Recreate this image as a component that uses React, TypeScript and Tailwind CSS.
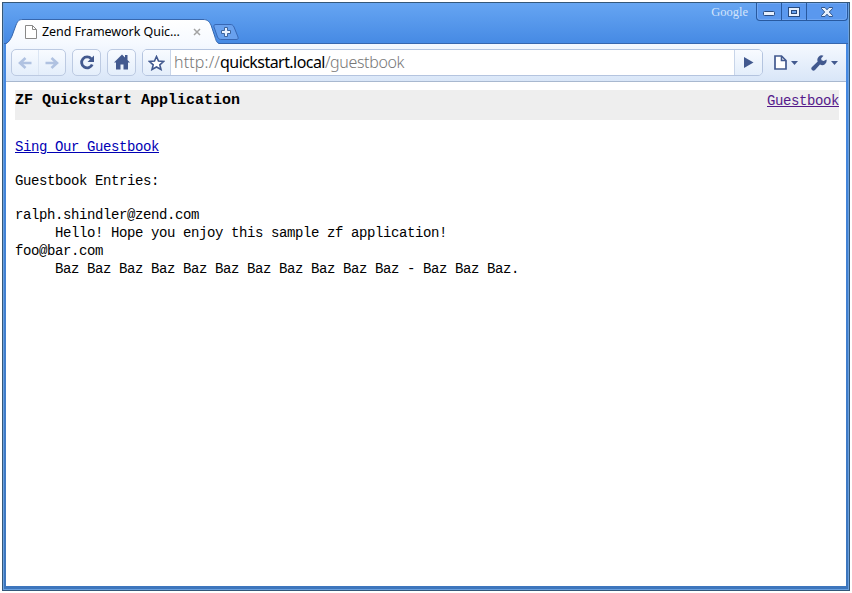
import React from "react";

const icon = "#42598f";

function TabStrip() {
  return (
    <div className="flex items-start pt-[16px]">
      <div className="relative h-[25px] w-[213px]">
        <svg className="absolute left-0 top-0" width="216" height="25" viewBox="0 0 216 25">
          <defs>
            <linearGradient id="tab" x1="0" y1="0" x2="0" y2="1">
              <stop offset="0" stopColor="#ffffff" />
              <stop offset="1" stopColor="#f5f9ff" />
            </linearGradient>
          </defs>
          <path
            d="M2 25 C5 23 6 21 8 17 L12 6 C14 1.5 15 0.5 19 0.5 H199 C203 0.5 205 2 207 6 L211 18 C212.500 22.500 213 24.500 216 25 Z"
            fill="url(#tab)"
          />
          <path
            d="M2 24.500 C5 23 6 21 8 17 L12 6 C14 1.5 15 0.5 19 0.5 H199 C203 0.5 205 2 207 6 L211 18 C212 22 213 24.500 216 24.500"
            fill="none"
            stroke="#3767ae"
          />
        </svg>
        <div className="relative flex h-[25px] items-center pl-[21px]">
          <svg width="12" height="14" viewBox="0 0 12 14">
            <path d="M.5 .5 H7.5 L11.5 4.5 V13.5 H.5 Z" fill="#fff" stroke="#888" />
            <path d="M7.5 .5 V4.5 H11.5" fill="none" stroke="#888" />
          </svg>
          <span className="ml-[5px] w-[146px] whitespace-nowrap font-['Noto_Sans',sans-serif] text-[12.5px] leading-[16px] tracking-[-0.05px] text-black">
            Zend Framework Quic...
          </span>
          <svg width="8" height="8" viewBox="0 0 8 8" className="ml-[5px]">
            <path d="M1 1 L7 7 M7 1 L1 7" stroke="#a3a3a3" strokeWidth="1.5" />
          </svg>
        </div>
      </div>
      <svg width="27" height="17" viewBox="0 0 27 17" className="-ml-[5px] mt-[5px]">
        <path
          d="M4 .5 H18 C20 .5 21 1 22 3 L26 13 C26.5 15 26 15.5 24 15.5 H10 C7.500 15.500 6.500 15 5.500 13 L2 3 C1.500 1.500 2 .5 4 .5 Z"
          fill="#69a1ee"
          stroke="#3868b4"
        />
        <path d="M12.500 3.500 H15.500 V6.500 H18.500 V9.500 H15.500 V12.500 H12.500 V9.500 H9.500 V6.500 H12.500 Z" fill="#e9f2ff" stroke="#3c659f" />
      </svg>
    </div>
  );
}

function WindowButtons() {
  return (
    <div className="flex items-start">
      <span className="mr-[8px] pt-[2px] font-['Liberation_Serif',serif] text-[12.5px] leading-[15px] text-[#d3e4fb]">Google</span>
      <div className="flex h-[18px] w-[92px] rounded-b-[4px] border border-t-0 border-[#28599f] bg-[#5a98ee] shadow-[inset_0_0_0_1px_#70a7f3]">
        <div className="flex w-[25px] items-center justify-center border-r border-[#28599f]">
          <svg width="12" height="6" viewBox="0 0 12 6" className="mt-[5px]">
            <rect x=".5" y=".5" width="11" height="4" rx="1" fill="#e6f0fd" stroke="#284b80" />
          </svg>
        </div>
        <div className="flex w-[25px] items-center justify-center border-r border-[#28599f]">
          <svg width="12" height="10" viewBox="0 0 12 10">
            <rect x=".5" y=".5" width="11" height="9" fill="#e6f0fd" stroke="#284b80" />
            <rect x="3.500" y="3.500" width="5" height="3" fill="#69a3ef" stroke="#284b80" />
          </svg>
        </div>
        <div className="flex flex-1 items-center justify-center">
          <svg width="12" height="10" viewBox="0 0 12 10">
            <path d="M.5 .5 H4 L6 2.800 L8 .5 H11.500 V1.500 L8.300 5 L11.500 8.500 V9.500 H8 L6 7.200 L4 9.500 H.5 V8.500 L3.700 5 L.5 1.500 Z" fill="#e6f0fd" stroke="#284b80" strokeWidth=".9" />
          </svg>
        </div>
      </div>
    </div>
  );
}

const button = "flex h-[27px] items-center justify-center rounded-[5px] border border-[#bccae2] bg-gradient-to-b from-[#f8fbff] to-[#e4eefb]";

function Toolbar() {
  return (
    <div className="flex h-[38px] items-start border-b border-[#a8b8cf] bg-gradient-to-b from-[#f5f9ff] to-[#d9e6f8] pl-[5px] pt-[5px]">
      <div className={button + " w-[55px]"}>
        <div className="flex h-full flex-1 items-center justify-center border-r border-[#dbe5f3]">
          <svg width="14" height="12" viewBox="0 0 14 12">
            <path d="M13.500 6 H2 M7.500 1 L2 6 L7.500 11" fill="none" stroke="#b0c2e1" strokeWidth="2.600" />
          </svg>
        </div>
        <div className="flex h-full flex-1 items-center justify-center">
          <svg width="14" height="12" viewBox="0 0 14 12">
            <path d="M.5 6 H12 M6.500 1 L12 6 L6.500 11" fill="none" stroke="#b0c2e1" strokeWidth="2.600" />
          </svg>
        </div>
      </div>
      <div className={button + " ml-[6px] w-[29px]"}>
        <svg width="16" height="15" viewBox="0 0 16 15">
          <path d="M12.300 3.800 A5.500 5.500 0 1 0 13.200 9.500" fill="none" stroke={icon} strokeWidth="2.800" />
          <path d="M15 .5 V7 H8.500 Z" fill={icon} />
        </svg>
      </div>
      <div className={button + " ml-[6px] w-[29px]"}>
        <svg width="16" height="16" viewBox="0 0 16 16" className="-mt-[2px]">
          <path d="M0 8.500 L8 .5 L11 3.500 V1 H13.500 V6 L16 8.500 H14 V15.500 H9.500 V10.500 H6.500 V15.500 H2 V8.500 Z" fill={icon} />
        </svg>
      </div>
      <div className="ml-[6px] flex h-[27px] w-[621px] overflow-hidden rounded-[5px] border border-[#b4c4df]">
        <div className="flex w-[28px] items-center justify-center border-r border-[#c8d5e9] bg-gradient-to-b from-[#f8fbff] to-[#e4eefb]">
          <svg width="17" height="16" viewBox="0 0 17 16">
            <path d="M8.500 1.500 L10.500 6 L15.500 6.500 L11.800 9.800 L13 14.500 L8.500 12 L4 14.500 L5.200 9.800 L1.500 6.500 L6.500 6 Z" fill="#fff" stroke={icon} strokeWidth="1.600" />
          </svg>
        </div>
        <div className="flex-1 whitespace-nowrap bg-white pl-[3px] font-['Noto_Sans',sans-serif] text-[16px] leading-[24px] text-[#777777]">
          <span className="font-light tracking-[0.15px]">http://</span><span className="tracking-[-0.56px] text-black">quickstart.local</span><span className="font-light tracking-[-0.36px]">/guestbook</span>
        </div>
        <div className="flex w-[28px] items-center justify-center border-l border-[#c8d5e9] bg-gradient-to-b from-[#f8fbff] to-[#e4eefb]">
          <svg width="10" height="11" viewBox="0 0 10 11" className="ml-[1px]">
            <path d="M0 0 L9.500 5.500 L0 11 Z" fill={icon} />
          </svg>
        </div>
      </div>
      <div className="ml-[11px] flex h-[27px] items-center">
        <svg width="13" height="15" viewBox="0 0 13 15">
          <path d="M1 1 H7.500 L12 5.500 V14 H1 Z" fill="#fff" stroke={icon} strokeWidth="1.700" />
          <path d="M7.500 1 V5.500 H12" fill="none" stroke={icon} strokeWidth="1.600" />
        </svg>
        <svg width="7" height="4" viewBox="0 0 7 4" className="ml-[4px] mt-[1px]">
          <path d="M0 0 H7 L3.500 4 Z" fill={icon} />
        </svg>
        <svg width="17" height="16" viewBox="0 0 17 16" className="ml-[13px]">
          <path d="M12.500 .7 A4.500 4.500 0 0 0 6.700 6.600 L1 12 A2 2 0 0 0 4 15 L9 9.600 A4.500 4.500 0 0 0 15.500 4.500 L12.700 6 L10.500 5.200 L10.200 3.200 Z" fill={icon} />
        </svg>
        <svg width="7" height="4" viewBox="0 0 7 4" className="ml-[3px] mt-[1px]">
          <path d="M0 0 H7 L3.500 4 Z" fill={icon} />
        </svg>
      </div>
    </div>
  );
}

function Page() {
  return (
    <main className="h-[504px] bg-white pl-[9px] pr-[7px] pt-[8px] font-['Liberation_Mono',monospace] text-[14px] leading-[18px] tracking-[-0.402px] text-black">
      <header className="flex h-[30px] items-start justify-between bg-[#eeeeee] pt-[2px]">
        <h1 className="text-[15px] font-bold tracking-normal">ZF Quickstart Application</h1>
        <a className="text-[#551a8b] underline" href="#guestbook">Guestbook</a>
      </header>
      <p className="mt-[18px]"><a className="text-[#0000b4] underline" href="#sign">Sing Our Guestbook</a></p>
      <p className="mt-[16px]">Guestbook Entries:</p>
      <dl className="mt-[16px]">
        <dt>ralph.shindler@zend.com</dt>
        <dd className="ml-[40px]">Hello! Hope you enjoy this sample zf application!</dd>
        <dt>foo@bar.com</dt>
        <dd className="ml-[40px]">Baz Baz Baz Baz Baz Baz Baz Baz Baz Baz Baz - Baz Baz Baz.</dd>
      </dl>
    </main>
  );
}

export default function App() {
  return (
    <div className="h-[593px] w-[852px] overflow-hidden bg-white pl-[2px] pt-[2px]">
      <div className="h-[589px] w-[848px] border border-[#345779] bg-[#4a84cf]">
        <div className="h-[587px] border-x border-b border-[#6ba1df] bg-gradient-to-b from-[#66a5f2] via-[#468ae4] via-[40px] to-[#3d76bd]">
          <div className="flex h-[41px] justify-between border-b border-[#3767ae]">
            <TabStrip />
            <WindowButtons />
          </div>
          <div className="mx-[2px] h-[542px]">
            <Toolbar />
            <Page />
          </div>
        </div>
      </div>
    </div>
  );
}
